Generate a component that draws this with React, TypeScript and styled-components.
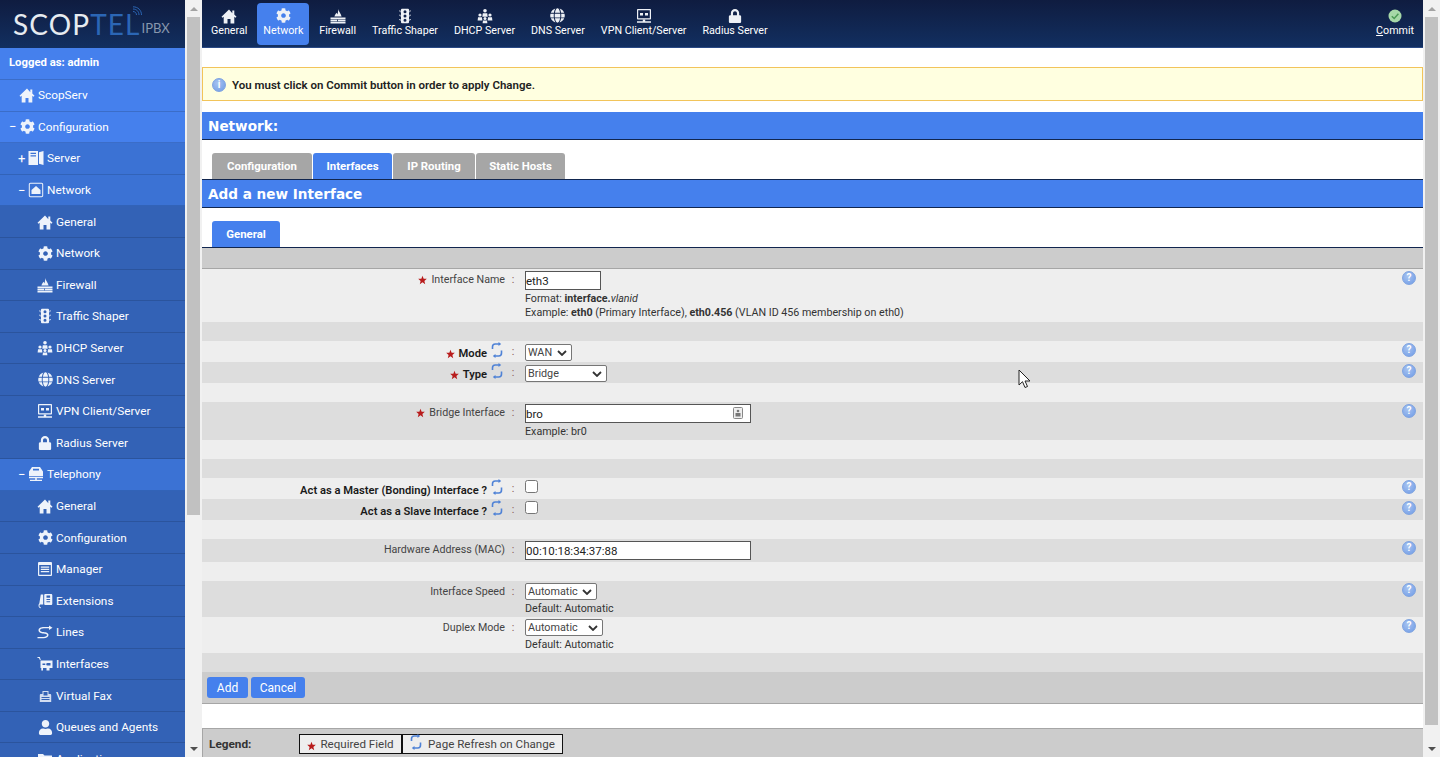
import React from "react";
import styled, { createGlobalStyle } from "styled-components";
import { FaCog, FaGlobe, FaLock, FaUser } from "react-icons/fa";

const FONT = `"Roboto", "Noto Sans", "Liberation Sans", sans-serif`;

const Global = createGlobalStyle`
  html, body { margin: 0; padding: 0; height: 100%; overflow: hidden; background: #fff; }
  #root { height: 100%; }
  * { box-sizing: border-box; }
  body { font-family: ${FONT}; font-size: 10.7px; color: #333; }
`;

type IconProps = { size?: number };
const Svg: React.FC<React.PropsWithChildren<IconProps>> = ({ size = 16, children }) => (
  <svg width={size} height={size} viewBox="0 0 16 16" fill="currentColor" style={{ flex: "none" }}>{children}</svg>
);

const HomeIcon = ({ size }: IconProps) => <Svg size={size}><path d="M8 1.500 .5 8.800l1 1 1.200-1.100V15.500h3.800v-4.500h3v4.500h3.800V8.700l1.200 1.100 1-1-2.200-2.300V2.400h-2v2.900L8 1.500Z" /></Svg>;
const CogIcon = ({ size = 16 }: IconProps) => <FaCog size={size - 1} style={{ flex: "none" }} />;
const FirewallIcon = ({ size }: IconProps) => <Svg size={size}>
  <path d="M8 1c.4 2 2.800 4.200 3.600 7.500H4.400C5 6.500 6 6 6.400 4.800c.5.600.8 1 .9 1.600C8 5 8.300 3 8 1Z" />
  <path d="M.5 9.500h15v1.700H.500zM.5 11.800h6.700v1.400H.5zM8 11.800h7.500v1.400H8zM.5 13.800h15V15.500H.5z" />
</Svg>;
const TrafficIcon = ({ size }: IconProps) => <Svg size={size}>
  <path fillRule="evenodd" d="M5 .8h6a1 1 0 0 1 1 1v12.400a1 1 0 0 1-1 1H5a1 1 0 0 1-1-1V1.800a1 1 0 0 1 1-1Zm3 1.500a1.500 1.500 0 1 0 0 3 1.500 1.500 0 0 0 0-3Zm0 4.200a1.500 1.500 0 1 0 0 3 1.500 1.500 0 0 0 0-3Zm0 4.200a1.500 1.500 0 1 0 0 3 1.500 1.500 0 0 0 0-3Z" />
  <path d="M2 2.500h1.500v2.200zM14 2.500h-1.500v2.200zM2 6.800h1.500V9zM14 6.800h-1.500V9zM2 11h1.500v2.200zM14 11h-1.500v2.200z" />
</Svg>;
const DhcpIcon = ({ size }: IconProps) => <Svg size={size}>
  <circle cx="8" cy="2.800" r="1.800" /><path d="M5.800 5.200h4.400l.5 3.600H5.300z" />
  <circle cx="3" cy="7" r="1.600" /><path d="M1 9.200h4l.4 3.300H.6z" />
  <circle cx="13" cy="7" r="1.600" /><path d="M11 9.200h4l.4 3.300h-4.800z" />
  <circle cx="8" cy="10.400" r="1.500" /><path d="M6 12.400h4l.4 2.800H5.600z" />
</Svg>;
const GlobeIcon = ({ size = 16 }: IconProps) => <FaGlobe size={size - 1} style={{ flex: "none" }} />;
const VpnIcon = ({ size }: IconProps) => <Svg size={size}>
  <path fillRule="evenodd" d="M1.800 1h12.400c.5 0 .8.300.8.800v8.900c0 .5-.3.800-.8.800H1.800c-.5 0-.8-.3-.8-.8V1.800c0-.5.300-.8.800-.8Zm.4 1.200v8h11.600v-8H2.200Z" />
  <path d="M4 5h3v2.500H4zM9 5h3v2.500H9zM6.800 11.500h2.400v1.800H6.800zM1 13.300h14v1.400H1z" />
</Svg>;
const LockIcon = ({ size = 16 }: IconProps) => <FaLock size={size - 2} style={{ flex: "none" }} />;
const ServerIcon = ({ size }: IconProps) => <Svg size={size}>
  <path fillRule="evenodd" d="M.5 1h9.500v14H.5V1Zm2 1.800v1.200h5.500V2.800H2.500Zm0 2.400v1.200h5.500V5.200H2.500Z" />
  <path d="M11 2.200 15.500 1v14L11 13.800z" />
</Svg>;
const NetworkIcon = ({ size }: IconProps) => <Svg size={size}>
  <path fillRule="evenodd" d="M2.500.8h11c1 0 1.700.7 1.700 1.700v11c0 1-.7 1.700-1.700 1.700h-11c-1 0-1.700-.7-1.700-1.700v-11c0-1 .7-1.700 1.700-1.700Zm0 1c-.4 0-.7.300-.7.700v11c0 .4.300.7.700.7h11c.4 0 .7-.3.700-.7v-11c0-.4-.3-.7-.7-.7h-11Z" />
  <path d="M8 4 3.500 8v4h9V8z" />
</Svg>;
const TelephonyIcon = ({ size }: IconProps) => <Svg size={size}>
  <path fillRule="evenodd" d="M4 1h8l3 4.500V10H1V5.500L4 1Zm1 1.800v1.600h6V2.800H5Z" />
  <path d="M1 10.800h14v1.500H1zM7.200 12.300h1.600v1.500H7.200zM2 13.800h12v1.200H2z" />
</Svg>;
const ManagerIcon = ({ size }: IconProps) => <Svg size={size}>
  <path fillRule="evenodd" d="M2 1h12a1 1 0 0 1 1 1v12a1 1 0 0 1-1 1H2a1 1 0 0 1-1-1V2a1 1 0 0 1 1-1Zm.2 3v9.800h11.600V4H2.200Z" />
  <path d="M3.800 5.500h8.400v1.300H3.800zM3.800 7.800h8.400v1.300H3.800zM3.800 10h8.400v1.300H3.800z" />
</Svg>;
const ExtensionIcon = ({ size }: IconProps) => <Svg size={size}>
  <path fillRule="evenodd" d="M8.500 1H14c.8 0 1.300.5 1.300 1.300v8.400c0 .8-.5 1.300-1.300 1.300H8.500c-.8 0-1.300-.5-1.300-1.300V2.300C7.200 1.500 7.700 1 8.500 1Zm1 1.500v2.200h3.600V2.500H9.500Zm0 3.500v1h3.600V6H9.500Zm0 2.200v1h3.600v-1H9.500Z" />
  <path d="M3.800 1.500h2.400v10H3.300c-.4 0-.8.300-.8 1.200s.5 1.700 1.500 1.700v.8c-1.600 0-2.500-1.200-2.500-2.800 0-.8.300-1.400.8-1.800z" />
</Svg>;
const LinesIcon = ({ size }: IconProps) => <Svg size={size}>
  <path d="M15.500 3.800 12 1.500v1.400H7C4 2.900 1.500 4 1.500 6.200c0 2.400 2.800 3 5 3.300 2 .3 3.500.6 3.500 1.600 0 1-1.500 1.800-3.500 1.800H.5v1.300h6c3 0 5-1.200 5-3.100 0-2.200-2.500-2.700-4.800-3-2-.3-3.700-.7-3.700-1.900 0-1.100 1.700-1.900 4-1.900h5V6z" />
</Svg>;
const InterfaceIcon = ({ size }: IconProps) => <Svg size={size}>
  <path d="M.5 1h2.300l1 3h-.9L2 2H.5z" />
  <path fillRule="evenodd" d="M3.500 4.500h12V12h-3v2.500h-3V12H6v2.500H4.300V12h-.8V4.500Zm7 2.500a1.300 1.300 0 1 0 0 2.600h3V7h-3Zm-5 .5v1.600h2.800V7.500H5.500Z" />
</Svg>;
const FaxIcon = ({ size }: IconProps) => <Svg size={size}>
  <path fillRule="evenodd" d="M5.500 3h6v3h1.500c.7 0 1.200.5 1.200 1.200V14H2.800V7.200c0-.7.500-1.200 1.200-1.200h1.500V3Zm1 1v3.500h4V4h-4Zm-2 5v1h8V9h-8Zm0 2v1h8v-1h-8Z" opacity=".85" />
</Svg>;
const UserIcon = ({ size = 16 }: IconProps) => <FaUser size={size - 1} style={{ flex: "none" }} />;
const FolderIcon = ({ size }: IconProps) => <Svg size={size}><path d="M1 3h5l1.500 1.500H15V14H1z" /></Svg>;

const Page = styled.div`display: flex; height: 757px; overflow: hidden;`;

/* ---------- sidebar ---------- */
const Sidebar = styled.aside`width: 185px; flex: none; display: flex; flex-direction: column; overflow: hidden; background: #3362b6;`;
const LogoBar = styled.div`
  height: 48px; flex: none; display: flex; align-items: flex-end; padding: 0 0 13px 13px; position: relative;
  background: linear-gradient(#0f1c40, #122f60);
  font-family: "Lato", sans-serif; color: #e6ebf0; line-height: 1;
`;
const LogoMain = styled.span`font-size: 28px; font-weight: 400; letter-spacing: 1.1px; line-height: 22px;`;
const LogoBlue = styled.span`color: #2b66b5; font-weight: 400;`;
const LogoSub = styled.span`font-size: 13px; color: #8797ad; margin-left: 1px;`;
const LogoWaves = styled.svg`position: absolute; left: 132px; top: 6px;`;
const Logged = styled.div`
  height: 32px; flex: none; display: flex; align-items: center; padding: 0 0 2px 9px;
  background: #4580ed; border-bottom: 1px solid #3b6dc8; color: #fff; font-weight: 700; font-size: 11.3px;
`;
const levelBg = ["#4580ed", "#3b72d4", "#3362b6"];
const levelLine = ["#3b6dc8", "#3263b8", "#2b549d"];
const MenuRow = styled.div<{ $level: number }>`
  height: 31.6px; flex: none; display: flex; align-items: center;
  padding-left: ${(p) => p.$level * 9 + 7}px;
  background: ${(p) => levelBg[p.$level]};
  border-bottom: 1px solid ${(p) => levelLine[p.$level]};
  color: #fff; font-size: 11.8px;
`;
const Expander = styled.span`width: 13px; flex: none; font-size: 13px; line-height: 1; color: #fff; padding-left: 2px;`;
const MenuIcon = styled.span`width: 14px; height: 16px; flex: none; margin-right: 4px; display: flex; align-items: center; justify-content: center; color: #eef3fb;`;

/* ---------- scrollbars ---------- */
const Scroll = styled.div`width: 17px; flex: none; display: flex; flex-direction: column; background: #f1f1f1;`;
const Arrow = styled.div<{ $down?: boolean }>`
  height: 17px; flex: none; display: flex; align-items: center; justify-content: center;
  &::before {
    content: ""; width: 0; height: 0; border-left: 4px solid transparent; border-right: 4px solid transparent;
    ${(p) => (p.$down ? "border-top: 4px solid #505050;" : "border-bottom: 4px solid #a3a3a3;")}
  }
`;
const Track = styled.div`flex: 1; padding: 0 2px;`;
const Thumb = styled.div<{ $h: number }>`height: ${(p) => p.$h}px; background: #c1c1c1;`;

/* ---------- top bar ---------- */
const Main = styled.main`flex: 1; min-width: 0; display: flex; flex-direction: column; overflow: hidden; position: relative;`;
const TopBar = styled.nav`
  height: 48px; flex: none; display: flex; align-items: flex-start; gap: 4px; padding: 3px 3px 0 3px;
  background: linear-gradient(#0f1c40, #122f60); border-bottom: 1px solid #2a4a85;
`;
const NavItem = styled.div<{ $active?: boolean }>`
  height: 42px; padding: 5px 6px 0; border-radius: 4px; display: flex; flex-direction: column; align-items: center;
  color: #fff; font-size: 10.7px; line-height: 16px; white-space: nowrap;
  background: ${(p) => (p.$active ? "#4580ed" : "transparent")};
`;
const NavGlyph = styled.span`height: 15px; display: flex; align-items: center; color: #eef1f6;`;
const CommitItem = styled(NavItem)`margin-left: auto;`;
const CommitDot = styled.svg`display: block;`;
const Under = styled.span`text-decoration: underline;`;

/* ---------- alert and headings ---------- */
const Alert = styled.div`
  height: 34px; margin-top: 19px; flex: none; display: flex; align-items: center; gap: 6px; padding: 1px 0 0 9px;
  background: #ffffe0; border: 1px solid #f2c45a; font-weight: 600; font-size: 11.5px; color: #222;
`;
const TitleBar = styled.div<{ $top?: number; $bordered?: boolean }>`
  flex: none; height: ${(p) => (p.$bordered ? 29 : 28)}px; margin-top: ${(p) => p.$top ?? 0}px;
  display: flex; align-items: center; padding-left: 6px;
  background: #4580ed; color: #fff; font-weight: 700; font-size: 13.6px;
  font-family: "DejaVu Sans", sans-serif;
  border-bottom: 1px solid #11264f;
  ${(p) => p.$bordered && "border-top: 1px solid #11264f;"}
`;
const Tabs = styled.div<{ $top: number }>`display: flex; gap: 1px; padding-left: 10px; margin-top: ${(p) => p.$top}px; flex: none;`;
const Tab = styled.div<{ $active?: boolean; $w: number }>`
  width: ${(p) => p.$w}px; height: 26px; display: flex; align-items: center; justify-content: center;
  background: ${(p) => (p.$active ? "#4580ed" : "#a6a6a6")}; color: #fff; font-weight: 700; font-size: 11.4px;
  border-radius: 3px 3px 0 0;
`;

/* ---------- form ---------- */
const TopStrip = styled.div`height: 22px; flex: none; background: #ccc; border-top: 1px solid #11264f; border-bottom: 1px solid #a6a6a6;`;
const Row = styled.div<{ $dark?: boolean; $h: number; $pad?: number }>`
  height: ${(p) => p.$h}px; flex: none; display: grid; grid-template-columns: 303px 20px 1fr 21px;
  padding-top: ${(p) => p.$pad ?? 2}px;
  background: ${(p) => (p.$dark ? "#dddddd" : "#eeeeee")};
`;
const Label = styled.div<{ $bold?: boolean; $off?: number }>`
  display: flex; justify-content: flex-end; align-items: flex-start; gap: 4px; white-space: nowrap; line-height: 16px;
  color: ${(p) => (p.$bold ? "#1a1a1a" : "#444")}; font-weight: ${(p) => (p.$bold ? 600 : 400)};
  font-size: ${(p) => (p.$bold ? 11.2 : 10.7)}px;
  padding-top: ${(p) => p.$off ?? 0}px;
  svg { flex: none; }
`;
const LabelText = styled.span``;
const Colon = styled.div`color: #855; text-align: center; line-height: 16px; padding-right: 4px; padding-top: 1px;`;
const Field = styled.div`display: flex; flex-direction: column; align-items: flex-start; line-height: 14px; color: #333;`;
const TextInput = styled.input<{ $w: number }>`
  width: ${(p) => p.$w}px; height: 19px; margin: 0; padding: 1px 0 0; font: inherit; font-size: 11.5px; color: #222;
  border: 1px solid #555; border-radius: 0; background: #fff; outline: none;
`;
const InputWrap = styled.div`position: relative;`;
const ContactMark = styled.svg`position: absolute; right: 8px; top: 3px;`;
const CHEVRON = `url("data:image/svg+xml,%3Csvg xmlns='http://www.w3.org/2000/svg' width='10' height='6' viewBox='0 0 10 6'%3E%3Cpath d='M1 1l4 4 4-4' fill='none' stroke='%23333' stroke-width='1.800'/%3E%3C/svg%3E")`;
const Choice = styled.select<{ $w: number; $mt?: number }>`
  appearance: none;
  width: ${(p) => p.$w}px; height: 17px; margin: ${(p) => p.$mt ?? 0}px 0 0; padding: 0 0 0 2px; font: inherit; font-size: 10.8px; color: #444;
  border: 1px solid #767676; border-radius: 2px;
  background: #fff ${CHEVRON} no-repeat right 4px center;
`;
const Check = styled.input`width: 13px; height: 13px; margin: 0; border-radius: 2px;`;
const Hint = styled.div<{ $top?: number }>`margin-top: ${(p) => p.$top ?? 0}px; font-size: 10.7px; white-space: nowrap;`;
const Help = styled.span`
  justify-self: start; width: 14px; height: 14px; border-radius: 50%;
  display: flex; align-items: center; justify-content: center;
  background: radial-gradient(circle at 40% 35%, #a7c3f0, #6f9be6); border: 1px solid #7ea3e0;
  color: #fff; font-size: 10px; font-weight: 700; line-height: 1;
`;
const ActionBar = styled.div`
  height: 32px; flex: none; display: flex; align-items: center; gap: 3px; padding: 0 0 0 5px;
  background: #ccc; border-bottom: 1px solid #a6a6a6;
`;
const Btn = styled.button<{ $w: number }>`
  width: ${(p) => p.$w}px; height: 21px; border: 0; border-radius: 3px; background: #4580ed; color: #fff; font: inherit; font-size: 12px; padding: 0;
`;
const Legend = styled.div`
  margin-top: 24px; height: 29px; flex: none; display: flex; align-items: center; padding: 2px 0 0 6px;
  background: #ccc; border: 1px solid #a6a6a6; border-width: 1px 0 0 1px; color: #333;
`;
const LegendTitle = styled.b`width: 90px; font-weight: 700; font-size: 11.8px; color: #333;`;
const LegendBox = styled.div<{ $w: number }>`
  width: ${(p) => p.$w}px; height: 20px; display: flex; align-items: center; justify-content: center; gap: 4px;
  background: #eee; border: 1px solid #111; color: #444; font-size: 11.6px; white-space: nowrap;
`;
const Pointer = styled.svg`position: absolute; left: 816px; top: 369px; pointer-events: none;`;
const StarMark = styled.svg`margin-top: 3px;`;
const RefreshMark = styled.svg`margin: -4px 2px 0 0;`;

const Star = () => (
  <StarMark width="9" height="10" viewBox="0 0 10 10">
    <path d="M5 .3 6.300 3.600 9.800 3.700 7.100 6 8 9.600 5 7.600 2 9.600 2.900 6 .2 3.700 3.700 3.600z" fill="#b81c1c" />
  </StarMark>
);
const Refresh = () => (
  <RefreshMark width="12" height="16" viewBox="0 0 12 16" fill="none" stroke="#4f82d6" strokeWidth="1.600">
    <path d="M1.500 7V4.700C1.500 3 2.800 2 4.200 2H8.500" />
    <path d="M7.500 0 10.200 2 7.500 4z" fill="#4f82d6" stroke="none" />
    <path d="M10.500 8.500V11C10.500 12.800 9.200 14 7.800 14H3.500" />
    <path d="M4.500 12 1.800 14 4.500 16z" fill="#4f82d6" stroke="none" />
  </RefreshMark>
);

type Item = { label: string; level: number; icon: React.FC<IconProps>; exp?: string };
const menu: Item[] = [
  { label: "ScopServ", level: 0, icon: HomeIcon },
  { label: "Configuration", level: 0, icon: CogIcon, exp: "−" },
  { label: "Server", level: 1, icon: ServerIcon, exp: "+" },
  { label: "Network", level: 1, icon: NetworkIcon, exp: "−" },
  { label: "General", level: 2, icon: HomeIcon },
  { label: "Network", level: 2, icon: CogIcon },
  { label: "Firewall", level: 2, icon: FirewallIcon },
  { label: "Traffic Shaper", level: 2, icon: TrafficIcon },
  { label: "DHCP Server", level: 2, icon: DhcpIcon },
  { label: "DNS Server", level: 2, icon: GlobeIcon },
  { label: "VPN Client/Server", level: 2, icon: VpnIcon },
  { label: "Radius Server", level: 2, icon: LockIcon },
  { label: "Telephony", level: 1, icon: TelephonyIcon, exp: "−" },
  { label: "General", level: 2, icon: HomeIcon },
  { label: "Configuration", level: 2, icon: CogIcon },
  { label: "Manager", level: 2, icon: ManagerIcon },
  { label: "Extensions", level: 2, icon: ExtensionIcon },
  { label: "Lines", level: 2, icon: LinesIcon },
  { label: "Interfaces", level: 2, icon: InterfaceIcon },
  { label: "Virtual Fax", level: 2, icon: FaxIcon },
  { label: "Queues and Agents", level: 2, icon: UserIcon },
  { label: "Applications", level: 2, icon: FolderIcon },
];
const topNav: { label: string; icon: React.FC<IconProps>; active?: boolean }[] = [
  { label: "General", icon: HomeIcon },
  { label: "Network", icon: CogIcon, active: true },
  { label: "Firewall", icon: FirewallIcon },
  { label: "Traffic Shaper", icon: TrafficIcon },
  { label: "DHCP Server", icon: DhcpIcon },
  { label: "DNS Server", icon: GlobeIcon },
  { label: "VPN Client/Server", icon: VpnIcon },
  { label: "Radius Server", icon: LockIcon },
];

const Scrollbar = ({ thumb }: { thumb: number }) => (
  <Scroll>
    <Arrow />
    <Track><Thumb $h={thumb} /></Track>
    <Arrow $down />
  </Scroll>
);

export default function App() {
  return (
    <Page>
      <Global />
      <Sidebar>
        <LogoBar>
          <LogoMain>SCOP<LogoBlue>TEL</LogoBlue></LogoMain>
          <LogoSub>IPBX</LogoSub>
          <LogoWaves width="12" height="10" viewBox="0 0 12 10" fill="none" stroke="#2b66b5" strokeWidth="1">
            <path d="M1 5.500c2 0 3.500 1.500 3.500 3.500M1 3c3.500 0 6 2.500 6 6M1 .8c5 0 8.500 3.500 8.500 8.200" />
          </LogoWaves>
        </LogoBar>
        <Logged>Logged as: admin</Logged>
        {menu.map((m, i) => {
          const I = m.icon;
          return (
            <MenuRow key={i} $level={m.level}>
              <Expander>{m.exp}</Expander>
              <MenuIcon><I size={16} /></MenuIcon>
              {m.label}
            </MenuRow>
          );
        })}
      </Sidebar>
      <Scrollbar thumb={498} />
      <Main>
        <TopBar>
          {topNav.map((n) => (
            <NavItem key={n.label} $active={n.active}>
              <NavGlyph><n.icon size={16} /></NavGlyph>
              {n.label}
            </NavItem>
          ))}
          <CommitItem>
            <NavGlyph>
              <CommitDot width="14" height="14" viewBox="0 0 14 14">
                <circle cx="7" cy="7" r="6.500" fill="#a6d8a8" />
                <path d="M3.800 7.200 6.200 9.500 10.400 4.800" fill="none" stroke="#4c9a55" strokeWidth="1.500" />
              </CommitDot>
            </NavGlyph>
            <span><Under>C</Under>ommit</span>
          </CommitItem>
        </TopBar>
        <Alert>
          <Help>i</Help>
          You must click on Commit button in order to apply Change.
        </Alert>
        <TitleBar $top={11}>Network:</TitleBar>
        <Tabs $top={13}>
          <Tab $w={100}>Configuration</Tab>
          <Tab $w={79} $active>Interfaces</Tab>
          <Tab $w={82}>IP Routing</Tab>
          <Tab $w={89}>Static Hosts</Tab>
        </Tabs>
        <TitleBar $bordered>Add a new Interface</TitleBar>
        <Tabs $top={13}>
          <Tab $w={68} $active>General</Tab>
        </Tabs>
        <TopStrip />

        <Row $h={53}>
          <Label $off={1}><Star /><LabelText>Interface Name</LabelText></Label>
          <Colon>:</Colon>
          <Field>
            <TextInput $w={76} readOnly value="eth3" />
            <Hint $top={2}>Format: <b>interface.</b><i>vlanid</i></Hint>
            <Hint>Example: <b>eth0</b> (Primary Interface), <b>eth0.456</b> (VLAN ID 456 membership on eth0)</Hint>
          </Field>
          <Help>?</Help>
        </Row>
        <Row $dark $h={19} />
        <Row $h={21}>
          <Label $bold $off={3}><Star /><LabelText>Mode</LabelText><Refresh /></Label>
          <Colon>:</Colon>
          <Field><Choice $w={47} $mt={1} defaultValue="WAN"><option>WAN</option></Choice></Field>
          <Help>?</Help>
        </Row>
        <Row $dark $h={21}>
          <Label $bold $off={3}><Star /><LabelText>Type</LabelText><Refresh /></Label>
          <Colon>:</Colon>
          <Field><Choice $w={82} $mt={1} defaultValue="Bridge"><option>Bridge</option></Choice></Field>
          <Help>?</Help>
        </Row>
        <Row $h={19} />
        <Row $dark $h={38}>
          <Label $off={1}><Star /><LabelText>Bridge Interface</LabelText></Label>
          <Colon>:</Colon>
          <Field>
            <InputWrap>
              <TextInput $w={226} readOnly value="bro" />
              <ContactMark width="10" height="12" viewBox="0 0 10 12">
                <rect x=".5" y=".5" width="9" height="11" rx="1" fill="#eee" stroke="#888" />
                <circle cx="5" cy="4" r="1.300" fill="#777" />
                <rect x="2.500" y="6" width="5" height="3.500" fill="#777" />
              </ContactMark>
            </InputWrap>
            <Hint $top={2}>Example: br0</Hint>
          </Field>
          <Help>?</Help>
        </Row>
        <Row $h={19} />
        <Row $dark $h={19} />
        <Row $h={21}>
          <Label $bold $off={3}><LabelText>Act as a Master (Bonding) Interface ?</LabelText><Refresh /></Label>
          <Colon>:</Colon>
          <Field><Check type="checkbox" readOnly /></Field>
          <Help>?</Help>
        </Row>
        <Row $dark $h={21}>
          <Label $bold $off={3}><LabelText>Act as a Slave Interface ?</LabelText><Refresh /></Label>
          <Colon>:</Colon>
          <Field><Check type="checkbox" readOnly /></Field>
          <Help>?</Help>
        </Row>
        <Row $h={19} />
        <Row $dark $h={23}>
          <Label $off={1}><LabelText>Hardware Address (MAC)</LabelText></Label>
          <Colon>:</Colon>
          <Field><TextInput $w={226} readOnly value="00:10:18:34:37:88" /></Field>
          <Help>?</Help>
        </Row>
        <Row $h={19} />
        <Row $dark $h={36}>
          <Label $off={1}><LabelText>Interface Speed</LabelText></Label>
          <Colon>:</Colon>
          <Field>
            <Choice $w={72} defaultValue="Automatic"><option>Automatic</option></Choice>
            <Hint $top={2}>Default: Automatic</Hint>
          </Field>
          <Help>?</Help>
        </Row>
        <Row $h={36}>
          <Label $off={1}><LabelText>Duplex Mode</LabelText></Label>
          <Colon>:</Colon>
          <Field>
            <Choice $w={78} defaultValue="Automatic"><option>Automatic</option></Choice>
            <Hint $top={2}>Default: Automatic</Hint>
          </Field>
          <Help>?</Help>
        </Row>
        <Row $dark $h={19} />
        <ActionBar>
          <Btn $w={41}>Add</Btn>
          <Btn $w={54}>Cancel</Btn>
        </ActionBar>
        <Legend>
          <LegendTitle>Legend:</LegendTitle>
          <LegendBox $w={103}><Star />Required Field</LegendBox>
          <LegendBox $w={161}><Refresh />Page Refresh on Change</LegendBox>
        </Legend>
        <Pointer width="13" height="20" viewBox="0 0 13 20">
          <path d="M1 1v15l3.500-3.300L7 18.500l2.500-1-2.500-5.500h5z" fill="#fff" stroke="#222" strokeWidth="1" />
        </Pointer>
      </Main>
      <Scrollbar thumb={708} />
    </Page>
  );
}
